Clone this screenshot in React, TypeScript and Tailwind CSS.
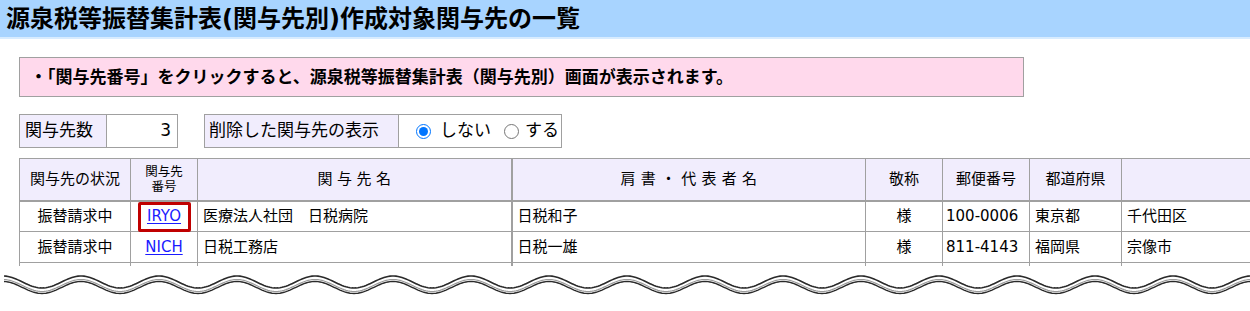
import React from "react";

const rows = [
  {
    status: "振替請求中",
    code: "IRYO",
    name: "医療法人社団　日税病院",
    rep: "日税和子",
    honorific: "様",
    zip: "100-0006",
    pref: "東京都",
    city: "千代田区",
    marked: true,
  },
  {
    status: "振替請求中",
    code: "NICH",
    name: "日税工務店",
    rep: "日税一雄",
    honorific: "様",
    zip: "811-4143",
    pref: "福岡県",
    city: "宗像市",
    marked: false,
  },
];

function wavePath(offset: number) {
  const period = 78;
  const amp = 6;
  const mid = 12 + offset;
  let d = "";
  for (let x = 4; x <= 1252; x += 2) {
    const y = mid + amp * Math.cos(((x - 3) / period) * 2 * Math.PI + Math.PI);
    d += (x === 4 ? "M" : "L") + x + " " + y.toFixed(2) + " ";
  }
  return d;
}

export default function App() {
  const th =
    "border border-[#a0a0a0] bg-[#f1edfd] font-normal text-center align-middle";
  const td = "border border-[#a0a0a0] h-[31px] align-middle whitespace-nowrap";

  return (
    <div
      className="w-[1250px] h-[311px] overflow-hidden bg-white text-black"
      style={{ fontFamily: '"DejaVu Sans", "Noto Sans CJK JP", sans-serif' }}
    >
      {/* title bar */}
      <div className="h-[39px] bg-[#a8d4ff] border-b-2 border-[#d8ecff] flex items-center pl-[6px]">
        <h1 className="text-[24px] font-bold leading-none">
          源泉税等振替集計表(関与先別)作成対象関与先の一覧
        </h1>
      </div>

      {/* notice */}
      <div className="mt-[18px] ml-[19px] w-[1005px] h-[40px] border border-[#a0a0a0] bg-[#ffd9ec] flex items-center pl-[10px]">
        <p className="text-[17px] font-bold leading-none">
          ・「関与先番号」をクリックすると、源泉税等振替集計表（関与先別）画面が表示されます。
        </p>
      </div>

      {/* counters */}
      <div className="mt-[17px] ml-[19px] flex gap-[26px] text-[17px] h-[34px]">
        <div className="flex border border-[#a0a0a0]">
          <div className="w-[87px] bg-[#f1edfd] flex items-center pl-[5px] border-r border-[#a0a0a0]">
            関与先数
          </div>
          <div className="w-[70px] flex items-center justify-end pr-[6px]">3</div>
        </div>
        <div className="flex border border-[#a0a0a0]">
          <div className="w-[194px] bg-[#f1edfd] flex items-center pl-[4px] border-r border-[#a0a0a0]">
            削除した関与先の表示
          </div>
          <label className="flex items-center pl-[17px] w-[162px]">
            <input
              type="radio"
              name="del"
              defaultChecked
              className="w-[15px] h-[15px] m-0 accent-[#0075ff]"
            />
            <span className="ml-[9px]">しない</span>
            <input type="radio" name="del" className="w-[15px] h-[15px] m-0 ml-[13px]" />
            <span className="ml-[6px]">する</span>
          </label>
        </div>
      </div>

      {/* list */}
      <div className="mt-[10px] ml-[19px] w-[1231px] h-[108px] overflow-hidden">
        <table className="table-fixed border-collapse w-[1302px] text-[15px] leading-none">
          <colgroup>
            <col className="w-[111px]" />
            <col className="w-[67px]" />
            <col className="w-[314px]" />
            <col className="w-[354px]" />
            <col className="w-[77px]" />
            <col className="w-[87px]" />
            <col className="w-[92px]" />
            <col className="w-[200px]" />
          </colgroup>
          <thead>
            <tr className="h-[42px] border-b-2 border-[#a0a0a0]">
              <th className={th}>関与先の状況</th>
              <th className={`${th} text-[12.5px] leading-[15px]`}>
                関与先
                <br />
                番号
              </th>
              <th className={`${th} tracking-[0.3em] pl-[0.3em]`}>関与先名</th>
              <th className={`${th} border-l-2 tracking-[0.35em] pl-[0.35em]`}>
                肩書・代表者名
              </th>
              <th className={th}>敬称</th>
              <th className={th}>郵便番号</th>
              <th className={th}>都道府県</th>
              <th className={th}></th>
            </tr>
          </thead>
          <tbody>
            {rows.map((r) => (
              <tr key={r.code}>
                <td className={`${td} text-center`}>{r.status}</td>
                <td className={`${td} text-center relative`}>
                  <a className="text-[#1a1aff] underline underline-offset-2 cursor-pointer">
                    {r.code}
                  </a>
                  {r.marked && (
                    <span className="absolute left-[7px] right-[6px] top-0 bottom-[-1px] border-[3px] border-[#c00000] rounded-[2px]" />
                  )}
                </td>
                <td className={`${td} pl-[5px]`}>{r.name}</td>
                <td className={`${td} border-l-2 pl-[5px]`}>{r.rep}</td>
                <td className={`${td} text-center`}>{r.honorific}</td>
                <td className={`${td} pl-[3px]`}>{r.zip}</td>
                <td className={`${td} pl-[5px]`}>{r.pref}</td>
                <td className={`${td} pl-[5px]`}>{r.city}</td>
              </tr>
            ))}
            {/* next row, cut off by the wave */}
            <tr>
              <td className={td}></td>
              <td className={td}></td>
              <td className={td}></td>
              <td className={`${td} border-l-2`}></td>
              <td className={td}></td>
              <td className={td}></td>
              <td className={td}></td>
              <td className={td}></td>
            </tr>
          </tbody>
        </table>
      </div>

      {/* cut mark */}
      <svg width="1250" height="30" className="block mt-[4px]" viewBox="0 0 1250 30">
        <path d={wavePath(0)} fill="none" stroke="#2a2a2a" strokeWidth="1.6" />
        <path d={wavePath(3.5)} fill="none" stroke="#9a9a9a" strokeWidth="1.2" />
        <path d={wavePath(5.5)} fill="none" stroke="#2a2a2a" strokeWidth="1.4" />
      </svg>
    </div>
  );
}
